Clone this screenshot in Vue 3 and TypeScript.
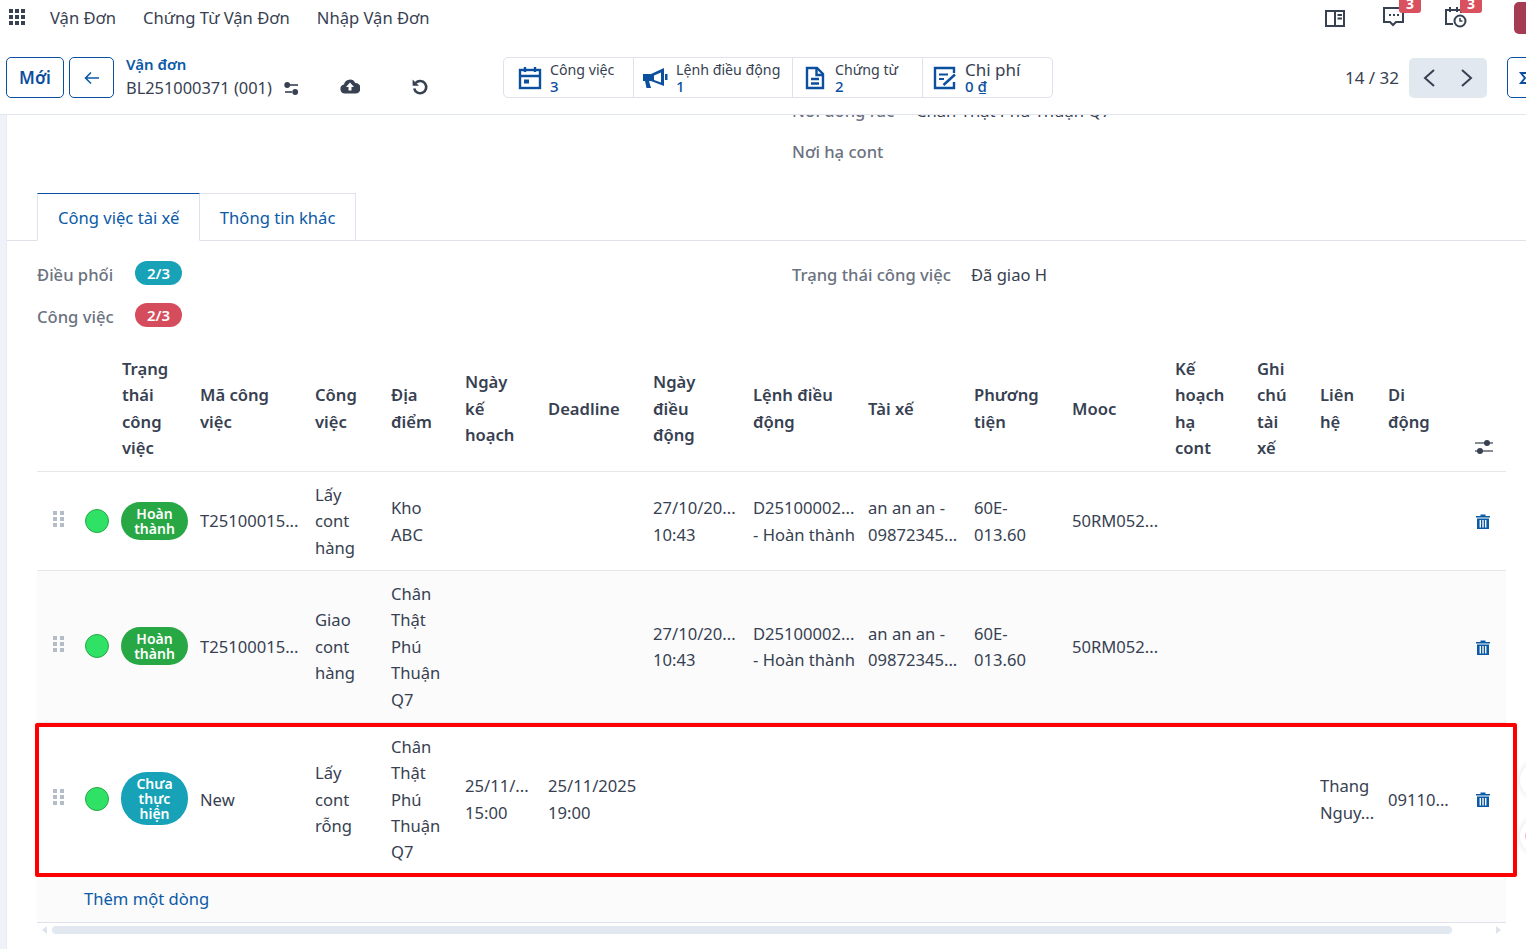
<script setup lang="ts">
interface Row {
  status: string
  tone: string
  code: string
  task: string
  place: string
  plan?: string
  deadline?: string
  moveDate?: string
  order?: string
  driver?: string
  vehicle?: string
  mooc?: string
  contact?: string
  mobile?: string
}

const columns = [
  { key: 'drag', label: '', width: 48 },
  { key: 'radio', label: '', width: 36 },
  { key: 'status', label: 'Trạng\nthái\ncông\nviệc', width: 79 },
  { key: 'code', label: 'Mã công\nviệc', width: 115 },
  { key: 'task', label: 'Công\nviệc', width: 76 },
  { key: 'place', label: 'Địa\nđiểm', width: 74 },
  { key: 'plan', label: 'Ngày\nkế\nhoạch', width: 83 },
  { key: 'deadline', label: 'Deadline', width: 105 },
  { key: 'moveDate', label: 'Ngày\nđiều\nđộng', width: 100 },
  { key: 'order', label: 'Lệnh điều\nđộng', width: 115 },
  { key: 'driver', label: 'Tài xế', width: 106 },
  { key: 'vehicle', label: 'Phương\ntiện', width: 98 },
  { key: 'mooc', label: 'Mooc', width: 103 },
  { key: 'planCont', label: 'Kế\nhoạch\nhạ\ncont', width: 82 },
  { key: 'note', label: 'Ghi\nchú\ntài\nxế', width: 63 },
  { key: 'contact', label: 'Liên\nhệ', width: 68 },
  { key: 'mobile', label: 'Di\nđộng', width: 86 },
  { key: 'trash', label: '', width: 32 }
]

const rows: Row[] = [
  { status: 'Hoàn thành', tone: 'green', code: 'T25100015...', task: 'Lấy\ncont\nhàng', place: 'Kho\nABC', moveDate: '27/10/20...\n10:43', order: 'D25100002...\n- Hoàn thành', driver: 'an an an -\n09872345...', vehicle: '60E-\n013.60', mooc: '50RM052...' },
  { status: 'Hoàn thành', tone: 'green', code: 'T25100015...', task: 'Giao\ncont\nhàng', place: 'Chân\nThật\nPhú\nThuận\nQ7', moveDate: '27/10/20...\n10:43', order: 'D25100002...\n- Hoàn thành', driver: 'an an an -\n09872345...', vehicle: '60E-\n013.60', mooc: '50RM052...' },
  { status: 'Chưa thực hiện', tone: 'cyan', code: 'New', task: 'Lấy\ncont\nrỗng', place: 'Chân\nThật\nPhú\nThuận\nQ7', plan: '25/11/...\n15:00', deadline: '25/11/2025\n19:00', contact: 'Thang\nNguy...', mobile: '09110...' }
]

const stats = [
  { label: 'Công việc', value: '3', icon: 'calendar' },
  { label: 'Lệnh điều động', value: '1', icon: 'horn' },
  { label: 'Chứng từ', value: '2', icon: 'doc' },
  { label: 'Chi phí', value: '0 ₫', icon: 'edit' }
]
</script>

<template>
  <div class="page">
    <header class="topbar">
      <svg class="apps" width="18" height="18" viewBox="0 0 18 18" fill="#374151">
        <rect x="1" y="1" width="4" height="4" /><rect x="7" y="1" width="4" height="4" /><rect x="13" y="1" width="4" height="4" />
        <rect x="1" y="7" width="4" height="4" /><rect x="7" y="7" width="4" height="4" /><rect x="13" y="7" width="4" height="4" />
        <rect x="1" y="13" width="4" height="4" /><rect x="7" y="13" width="4" height="4" /><rect x="13" y="13" width="4" height="4" />
      </svg>
      <nav class="menu">
        <span>Vận Đơn</span><span>Chứng Từ Vận Đơn</span><span>Nhập Vận Đơn</span>
      </nav>
      <div class="systray">
        <svg class="tray-book" width="20" height="18" viewBox="0 0 20 18" fill="none" stroke="#374151" stroke-width="2">
          <rect x="1" y="1" width="18" height="15" /><path d="M10 1v15M12.5 5H17M12.5 8.5H17" />
        </svg>
        <span class="tray-item tray-chat">
          <svg width="22" height="22" viewBox="0 0 22 22" fill="none" stroke="#374151" stroke-width="2">
            <path d="M1 2h19v14h-7l-3 3-3-3H1z" />
            <path d="M6 9h2M10 9h2M14 9h2" />
          </svg>
          <b class="tray-badge">3</b>
        </span>
        <span class="tray-item tray-clock">
          <svg width="22" height="22" viewBox="0 0 22 22" fill="none" stroke="#374151" stroke-width="2">
            <path d="M8 18H1V4h15v3M5 1v5M12 1v5" />
            <circle cx="15" cy="15" r="5.5" />
            <path d="M15 12v3h2.5" stroke-width="1.5" />
          </svg>
          <b class="tray-badge">3</b>
        </span>
        <span class="avatar"></span>
      </div>
    </header>

    <section class="control">
      <button class="btn btn-new">Mới</button>
      <button class="btn btn-back" aria-label="Quay lại">
        <svg width="16" height="14" viewBox="0 0 16 14" fill="none" stroke="#0b5aa6" stroke-width="1.6">
          <path d="M15 7H2M7 1.5 1.5 7 7 12.5" />
        </svg>
      </button>
      <div class="crumb">
        <a>Vận đơn</a>
        <div class="crumb-line">
          <span>BL251000371 (001)</span>
          <svg width="15" height="13" viewBox="0 0 15 13" fill="#374151">
            <circle cx="3.2" cy="3" r="2.9" /><rect x="6" y="2.2" width="8" height="1.6" />
            <circle cx="11.2" cy="10" r="2.9" /><rect x="1" y="9.2" width="7" height="1.6" />
          </svg>
        </div>
      </div>
      <svg class="cloud" width="20" height="16" viewBox="0 0 20 16">
        <path fill="#374151" d="M5 15.5a4.5 4.5 0 0 1-1-8.9A6 6 0 0 1 15.3 5 5.2 5.2 0 0 1 15.5 15.5z" />
        <path fill="#fff" d="M10 4.5 14 9h-2.5v3.5h-3V9H6z" />
      </svg>
      <svg class="undo" width="18" height="18" viewBox="0 0 18 18" fill="none" stroke="#374151" stroke-width="2.6">
        <path d="M4.6 5A6.1 6.1 0 1 1 3.2 10.5" />
        <path d="M1.6 1.4v6.4H8z" fill="#374151" stroke="none" />
      </svg>

      <div class="stats">
        <div v-for="s in stats" :key="s.label" class="stat" :class="'stat-' + s.icon">
          <svg v-if="s.icon === 'calendar'" width="24" height="24" viewBox="0 0 24 24" fill="none" stroke="#0b4f9e" stroke-width="2.4">
            <rect x="2" y="4" width="20" height="18" /><path d="M2 10h20M7 1v5M17 1v5" />
            <rect x="6" y="13.5" width="5" height="4" fill="#0b4f9e" stroke="none" />
          </svg>
          <svg v-else-if="s.icon === 'horn'" width="26" height="24" viewBox="0 0 26 24" fill="#0b4f9e">
            <path d="M1 8h8L22 2v18L9 15H7l2 7H4.5L3 15H1z" />
            <path d="M12 9.5 19 6.5v10l-7-2.5z" fill="#fff" />
            <rect x="23" y="8" width="2.5" height="6" />
          </svg>
          <svg v-else-if="s.icon === 'doc'" width="20" height="24" viewBox="0 0 20 24" fill="none" stroke="#0b4f9e" stroke-width="2.4">
            <path d="M2 2h10l6 6v14H2z" /><path d="M11.5 2v7H18M6 13h8M6 17.5h8" />
          </svg>
          <svg v-else width="24" height="24" viewBox="0 0 24 24" fill="none" stroke="#0b4f9e" stroke-width="2.4">
            <path d="M21 7V2H2v20h19v-6" /><path d="M6 8.5h9M6 13h5" stroke-width="2" />
            <path d="M10.5 19 22 8.5" />
          </svg>
          <div class="stat-text">
            <span class="stat-label">{{ s.label }}</span>
            <span class="stat-value">{{ s.value }}</span>
          </div>
        </div>
      </div>

      <div class="pager">
        <span class="pager-count">14 / 32</span>
        <div class="pager-btns">
          <svg width="14" height="20" viewBox="0 0 14 20" fill="none" stroke="#374151" stroke-width="2"><path d="M12 2 3 10l9 8" /></svg>
          <svg width="14" height="20" viewBox="0 0 14 20" fill="none" stroke="#374151" stroke-width="2"><path d="m2 2 9 8-9 8" /></svg>
        </div>
      </div>
      <span class="btn btn-edge">
        <svg width="14" height="14" viewBox="0 0 14 14" fill="none" stroke="#0b4f9e" stroke-width="2">
          <path d="M12 2H3l4 5-4 5h8" />
        </svg>
      </span>
    </section>

    <main class="main">
      <div class="sheet">
        <div class="upper">
          <div class="upper-row clipped"><span class="f-label">Nơi đóng rác</span><span>Chân Thật Phú Thuận Q7</span></div>
          <div class="upper-row"><span class="f-label">Nơi hạ cont</span></div>
        </div>

        <div class="tabs">
          <span class="tab tab-active">Công việc tài xế</span>
          <span class="tab">Thông tin khác</span>
        </div>

        <div class="fields">
          <div class="field-col">
            <div class="field"><span class="f-name">Điều phối</span><b class="pill pill-cyan">2/3</b></div>
            <div class="field"><span class="f-name">Công việc</span><b class="pill pill-red">2/3</b></div>
          </div>
          <div class="field-col right-col">
            <div class="field"><span class="f-label">Trạng thái công việc</span><span class="f-value">Đã giao H</span></div>
          </div>
        </div>

        <div class="table-wrap">
          <table class="grid">
            <colgroup>
              <col v-for="c in columns" :key="c.key" :style="{ width: c.width + 'px' }" />
            </colgroup>
            <thead>
              <tr>
                <th v-for="c in columns" :key="c.key">
                  <template v-if="c.key !== 'trash'">{{ c.label }}</template>
                  <svg v-else class="sliders" width="20" height="16" viewBox="0 0 20 16" fill="#374151">
                    <rect x="1" y="3.4" width="18" height="1.2" /><circle cx="13" cy="4" r="3" />
                    <rect x="1" y="11.4" width="18" height="1.2" /><circle cx="6" cy="12" r="3" />
                  </svg>
                </th>
              </tr>
            </thead>
            <tbody>
              <tr v-for="(r, i) in rows" :key="i" :class="{ odd: i === 1 }">
                <td class="c-drag">
                  <svg width="12" height="16" viewBox="0 0 12 16" fill="#b4bcc8">
                    <rect x="0" y="0" width="4" height="4" /><rect x="7" y="0" width="4" height="4" />
                    <rect x="0" y="6" width="4" height="4" /><rect x="7" y="6" width="4" height="4" />
                    <rect x="0" y="12" width="4" height="4" /><rect x="7" y="12" width="4" height="4" />
                  </svg>
                </td>
                <td class="c-radio"><span class="dot"></span></td>
                <td class="c-status"><span class="badge" :class="'badge-' + r.tone">{{ r.status }}</span></td>
                <td>{{ r.code }}</td>
                <td>{{ r.task }}</td>
                <td>{{ r.place }}</td>
                <td>{{ r.plan }}</td>
                <td>{{ r.deadline }}</td>
                <td>{{ r.moveDate }}</td>
                <td>{{ r.order }}</td>
                <td>{{ r.driver }}</td>
                <td>{{ r.vehicle }}</td>
                <td>{{ r.mooc }}</td>
                <td></td>
                <td></td>
                <td>{{ r.contact }}</td>
                <td>{{ r.mobile }}</td>
                <td class="c-trash">
                  <svg width="14" height="15" viewBox="0 0 14 15" fill="#0b5aa6">
                    <path d="M4.5 2V.6h5V2H14v1.6H0V2zM1 4.6h12V15H1zM3.6 6v7.4h1.4V6zm2.7 0v7.4h1.4V6zm2.7 0v7.4h1.4V6z" fill-rule="evenodd" />
                  </svg>
                </td>
              </tr>
              <tr class="add-row">
                <td colspan="18"><a>Thêm một dòng</a></td>
              </tr>
            </tbody>
          </table>
          <div class="highlight"></div>
        </div>

        <div class="scrollbar">
          <span class="arrow arrow-left"></span>
          <span class="thumb"></span>
          <span class="arrow arrow-right"></span>
        </div>
      </div>
    </main>

    <span class="fab fab-one"></span>
    <span class="fab fab-two"></span>
  </div>
</template>

<style>
html, body { margin: 0; overflow: hidden; background: #fff; }
</style>

<style scoped>
.page {
  position: relative;
  width: 1526px;
  height: 949px;
  overflow: hidden;
  display: flex;
  flex-direction: column;
  font-family: "Noto Sans", "Open Sans", sans-serif;
  font-size: 16.6px;
  color: #374151;
  background: #fff;
}
.topbar {
  height: 38px;
  flex: none;
  display: flex;
  align-items: center;
  padding: 0 0 4px 8px;
  box-sizing: border-box;
}
.apps { flex: none; }
.menu { display: flex; gap: 27px; margin-left: 24px; color: #374151; }
.systray { display: flex; align-items: center; flex: 1; width: 0; justify-content: flex-end; margin-right: -16px; }
.tray-book { margin-top: 3px; }
.tray-item { position: relative; display: block; height: 22px; }
.tray-chat { margin-left: 38px; }
.tray-clock { margin-left: 40px; }
.tray-badge {
  position: absolute;
  top: -9px;
  right: -16px;
  width: 22px;
  height: 16px;
  border-radius: 3px;
  background: #d9505f;
  color: #fff;
  font-size: 14px;
  line-height: 14px;
  text-align: center;
}
.tray-clock .tray-badge { right: -15px; }
.avatar { width: 28px; height: 32px; margin: 2px 0 0 47px; border-radius: 5px; background: #a63c54; }
.control {
  height: 77px;
  flex: none;
  box-sizing: border-box;
  border-bottom: 1px solid #e2e6ee;
  display: flex;
  align-items: flex-start;
  padding: 19px 0 0 6px;
  position: relative;
}
.btn {
  box-sizing: border-box;
  height: 41px;
  border: 1px solid #0b4f9e;
  border-radius: 5px;
  background: #fff;
  font: inherit;
  font-size: 17px;
  font-weight: 600;
  color: #0b4f9e;
  padding: 0;
  display: flex;
  align-items: center;
  justify-content: center;
  flex: none;
}
.btn-new { width: 58px; }
.btn-back { width: 45px; margin-left: 5px; }
.crumb { margin-left: 12px; width: 176px; line-height: 22px; margin-top: -4px; flex: none; }
.crumb a { display: block; font-weight: 600; font-size: 15px; color: #0b5aa6; }
.crumb-line { display: flex; align-items: center; gap: 12px; white-space: nowrap; margin-top: 2px; font-size: 16.4px; }
.cloud { margin: 21px 0 0 38px; flex: none; }
.undo { margin: 21px 0 0 51px; flex: none; }
.stats {
  margin-left: 74px;
  height: 41px;
  box-sizing: border-box;
  border: 1px solid #dfe2ec;
  border-radius: 5px;
  display: flex;
  flex: none;
}
.stat {
  box-sizing: border-box;
  border-right: 1px solid #dfe2ec;
  display: flex;
  align-items: center;
  color: #0b4f9e;
  padding-left: 14px;
}
.stat:last-child { border-right: 0; }
.stat-calendar { width: 130px; }
.stat-horn { width: 159px; padding-left: 8px; }
.stat-doc { width: 130px; padding-left: 12px; }
.stat-edit { width: 129px; padding-left: 10px; }
.stat-text { display: flex; flex-direction: column; margin-left: 8px; line-height: 16px; }
.stat-doc .stat-text { margin-left: 10px; }
.stat-label { font-size: 14.2px; color: #374151; white-space: nowrap; padding-top: 1px; }
.stat-value { font-size: 15px; font-weight: 500; color: #0b4f9e; }
.stat-edit .stat-label { font-size: 17px; }
.pager { display: flex; align-items: center; margin-left: auto; height: 41px; }
.pager-count { font-size: 17px; margin-right: 10px; }
.pager-btns {
  width: 78px;
  height: 40px;
  border-radius: 5px;
  background: #e2e8f0;
  display: flex;
  align-items: center;
  justify-content: center;
  gap: 24px;
}
.btn-edge { width: 40px; margin: 0 -21px 0 20px; justify-content: flex-start; padding-left: 10px; }
.btn-edge svg { flex: none; }
.main { flex: 1; min-height: 0; overflow: hidden; background: #eff2f8; padding-left: 6px; }
.sheet { background: #fff; height: 100%; border-left: 1px solid #e8ebf2; overflow: hidden; }
.upper { margin-top: -17px; padding-left: 785px; line-height: 26px; }
.upper-row { height: 26px; display: flex; gap: 22px; white-space: nowrap; }
.upper-row + .upper-row { margin-top: 15px; }
.f-label { color: #6b7280; font-weight: 500; }
.tabs {
  margin-top: 28px;
  padding-left: 30px;
  display: flex;
  border-bottom: 1px solid #dfe2ec;
  height: 48px;
  box-sizing: border-box;
}
.tab {
  box-sizing: border-box;
  height: 48px;
  padding: 0 19.5px 0 20px;
  line-height: 48px;
  color: #0b5aa6;
  border: 1px solid #dfe2ec;
  border-left: 0;
  margin-bottom: -1px;
}
.tab-active { border-left: 1px solid #dfe2ec; border-top: 1px solid #0b4f9e; border-bottom: 1px solid #fff; }
.fields { display: flex; padding: 20px 0 0 30px; }
.field-col { width: 755px; flex: none; display: flex; flex-direction: column; gap: 16px; }
.field { display: flex; align-items: center; height: 26px; }
.f-name { width: 98px; color: #6b7280; font-weight: 500; }
.f-value { margin-left: 20px; }
.pill {
  width: 47px;
  height: 24px;
  margin-top: -3px;
  border-radius: 12px;
  color: #fff;
  font-size: 15px;
  font-weight: 600;
  line-height: 24px;
  text-align: center;
}
.pill-cyan { background: #17a2b8; }
.pill-red { background: #d54d5c; }
.table-wrap { position: relative; margin: 26px 0 0 30px; width: 1469px; }
.grid { table-layout: fixed; border-collapse: collapse; width: 1469px; line-height: 26.4px; white-space: pre; }
.grid th {
  font-weight: 600;
  text-align: left;
  vertical-align: middle;
  padding: 0 0 8px;
  border-bottom: 1px solid #e5e7eb;
  height: 116px;
  box-sizing: border-box;
  color: #374151;
}
.grid th:nth-child(3) { padding-left: 1px; }
.grid th:last-child { vertical-align: bottom; padding: 0 0 16px; }
.sliders { display: block; }
.grid td { padding: 2px 0 0; vertical-align: middle; border-bottom: 1px solid #e5e7eb; }
.grid tbody tr:nth-child(1) td { height: 99px; box-sizing: border-box; }
.grid tbody tr:nth-child(2) td { height: 152px; box-sizing: border-box; }
.grid tbody tr:nth-child(3) td { height: 153px; box-sizing: border-box; border-bottom: 0; }
.odd td { background: #fbfbfc; }
.grid .c-drag { padding: 0 0 0 16px; }
.grid .c-drag svg { display: block; margin-top: -4px; }
.grid .c-radio { padding: 0; }
.grid .c-status { padding: 0; }
.dot {
  display: block;
  width: 24px;
  height: 24px;
  box-sizing: border-box;
  border-radius: 50%;
  background: #2fe265;
  border: 1px solid #28a745;
}
.badge {
  display: flex;
  width: 67px;
  box-sizing: border-box;
  border-radius: 26px;
  color: #fff;
  font-size: 14px;
  font-weight: 600;
  line-height: 15px;
  text-align: center;
  padding: 4px 10px;
  justify-content: center;
  white-space: normal;
}
.badge-green { background: #28a745; }
.badge-cyan { background: #17a2b8; padding: 4px 12px; }
.grid .c-trash { padding: 2px 0 0 2px; }
.grid .c-trash svg { display: block; }
.add-row td { height: 47px; box-sizing: border-box; background: #fbfbfc; padding-left: 47px !important; border-bottom: 1px solid #dfe2ec !important; }
.add-row a { color: #0b5aa6; }
.highlight {
  position: absolute;
  left: -2px;
  right: -11px;
  top: 368px;
  height: 154px;
  border: 4px solid #f00;
  border-radius: 2px;
  pointer-events: none;
  box-sizing: border-box;
}
.scrollbar { display: flex; align-items: center; margin: 3px 0 0 30px; width: 1469px; height: 8px; }
.arrow { width: 0; height: 0; border-top: 4px solid transparent; border-bottom: 4px solid transparent; flex: none; }
.arrow-left { border-right: 5px solid #dfe4ec; margin-left: 5px; }
.arrow-right { border-left: 5px solid #dfe4ec; margin-left: 44px; }
.thumb { width: 1400px; height: 8px; border-radius: 4px; background: #e2e8f0; margin-left: 5px; }
.fab {
  position: absolute;
  left: 1520px;
  width: 36px;
  height: 36px;
  border-radius: 50%;
  background: #fff;
  box-shadow: 0 0 6px rgba(0, 0, 0, 0.12);
}
.fab-one { top: 762px; }
.fab-two { top: 818px; }
.fab-two::after {
  content: "";
  position: absolute;
  left: 5px;
  top: 10px;
  width: 16px;
  height: 16px;
  border-radius: 50%;
  background: #f6b9c6;
}
</style>
